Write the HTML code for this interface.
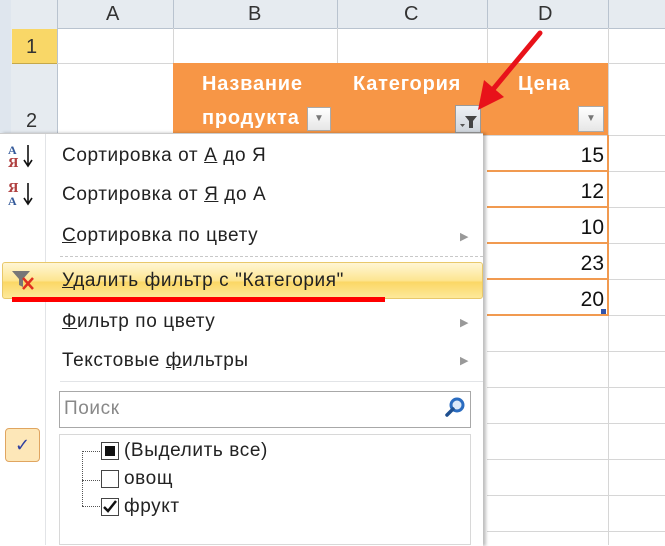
<!DOCTYPE html>
<html><head><meta charset="utf-8"><style>
body{margin:0;width:665px;height:545px;overflow:hidden;background:#fff;font-family:"Liberation Sans","DejaVu Sans",sans-serif;position:relative}
.a{position:absolute}
.t{font-size:19px;letter-spacing:0.6px;color:#222;white-space:nowrap}
.hl{position:absolute;left:0;right:0;height:1px;background:#d6d6d6}
.vl{position:absolute;top:0;bottom:0;width:1px;background:#d6d6d6}
.num{position:absolute;left:487px;width:117px;text-align:right;font-size:21px;color:#111}
.ob{position:absolute;left:487px;width:121px;height:2px;background:#f19a50}
.hd{color:#fff;font-weight:bold;font-size:20px;letter-spacing:0.8px}
u{text-decoration:underline}
</style></head><body>
<div class="a" style="left:0;top:0;width:665px;height:28px;background:#e6ebf0;border-bottom:1px solid #b9c3cf"></div>
<div class="a" style="left:0;top:0;width:11px;height:545px;background:#dfe6ee"></div>
<div class="a" style="left:11px;top:0;width:46px;height:545px;background:#e6ebf0;border-right:1px solid #b9c3cf"></div>
<div class="a" style="left:12px;top:29px;width:45px;height:34px;background:#f9d767;border-bottom:1px solid #c5a84a"></div>
<div class="a t" style="left:26px;top:36px;font-size:20px;color:#333">1</div>
<div class="a t" style="left:26px;top:110px;font-size:20px;color:#333">2</div>
<div class="a t" style="left:106px;top:3px;font-size:20px;color:#333">A</div>
<div class="a t" style="left:248px;top:3px;font-size:20px;color:#333">B</div>
<div class="a t" style="left:404px;top:3px;font-size:20px;color:#333">C</div>
<div class="a t" style="left:538px;top:3px;font-size:20px;color:#333">D</div>
<div class="vl" style="left:173px;top:0;height:28px;background:#b9c3cf"></div>
<div class="vl" style="left:337px;top:0;height:28px;background:#b9c3cf"></div>
<div class="vl" style="left:487px;top:0;height:28px;background:#b9c3cf"></div>
<div class="vl" style="left:608px;top:0;height:28px;background:#b9c3cf"></div>
<div class="vl" style="left:173px;top:28px;height:35px"></div>
<div class="vl" style="left:337px;top:28px;height:35px"></div>
<div class="vl" style="left:487px;top:28px;height:35px"></div>
<div class="vl" style="left:608px;top:28px"></div>
<div class="hl" style="left:57px;top:63px"></div>
<div class="hl" style="left:57px;top:135px"></div>
<div class="hl" style="left:487px;top:171px"></div><div class="hl" style="left:487px;top:207px"></div><div class="hl" style="left:487px;top:243px"></div><div class="hl" style="left:487px;top:279px"></div><div class="hl" style="left:487px;top:315px"></div><div class="hl" style="left:487px;top:351px"></div><div class="hl" style="left:487px;top:387px"></div><div class="hl" style="left:487px;top:423px"></div><div class="hl" style="left:487px;top:459px"></div><div class="hl" style="left:487px;top:495px"></div><div class="hl" style="left:487px;top:531px"></div>
<div class="a" style="left:173px;top:63px;width:435px;height:72px;background:#f79646"></div>
<div class="a t hd" style="left:202px;top:73px">Название</div>
<div class="a t hd" style="left:202px;top:107px">продукта</div>
<div class="a t hd" style="left:353px;top:73px">Категория</div>
<div class="a t hd" style="left:518px;top:73px">Цена</div>
<div class="a" style="left:307px;top:107px;width:24px;height:24px;background:linear-gradient(#fff,#e6e6e6);border:1px solid #aaa;box-sizing:border-box;color:#777;font-size:10px;text-align:center;line-height:22px">▼</div>
<div class="a" style="left:455px;top:105px;width:26px;height:28px;background:linear-gradient(#eef1f5,#cfd5dc);border:1px solid #999;box-sizing:border-box"><svg width="24" height="26"><path d="M4 18h5l-2.5 3z" fill="#555"/><path d="M9 10h12l-4 5v7h-4v-7z" fill="#444"/></svg></div>
<div class="a" style="left:578px;top:106px;width:26px;height:26px;background:linear-gradient(#fff,#e6e6e6);border:1px solid #aaa;box-sizing:border-box;color:#777;font-size:10px;text-align:center;line-height:24px">▼</div>
<div class="ob" style="top:170px"></div><div class="ob" style="top:206px"></div><div class="ob" style="top:242px"></div><div class="ob" style="top:278px"></div><div class="ob" style="top:314px"></div>
<div class="a" style="left:607px;top:135px;width:2px;height:181px;background:#f19a50"></div>
<div class="num" style="top:144px">15</div><div class="num" style="top:180px">12</div><div class="num" style="top:216px">10</div><div class="num" style="top:252px">23</div><div class="num" style="top:288px">20</div>
<div class="a" style="left:601px;top:309px;width:5px;height:5px;background:#3355aa"></div>
<svg class="a" style="left:460px;top:25px" width="100" height="110"><path d="M80 8 L30 68" stroke="#e8121a" stroke-width="5" stroke-linecap="round"/><path d="M18 85 L24 55 L44 72z" fill="#e8121a"/></svg>
<div class="a" style="left:0;top:133px;width:483px;height:412px;background:#fff;box-shadow:3px 0 3px rgba(0,0,0,.25);border-top:1px solid #ccc"></div>
<div class="a" style="left:45px;top:134px;width:1px;height:411px;background:#e2e4e7"></div>
<svg class="a" style="left:8px;top:142px" width="30" height="28"><text x="0" y="12" font-size="12" font-weight="bold" fill="#345a9a" font-family="Liberation Serif">A</text><text x="0" y="25" font-size="12" font-weight="bold" fill="#b04040" font-family="DejaVu Serif">Я</text><path d="M20 3v20M16 18l4 6 4-6" stroke="#111" stroke-width="1.6" fill="none"/></svg>
<svg class="a" style="left:8px;top:180px" width="30" height="28"><text x="0" y="12" font-size="12" font-weight="bold" fill="#b04040" font-family="DejaVu Serif">Я</text><text x="0" y="25" font-size="12" font-weight="bold" fill="#345a9a" font-family="Liberation Serif">A</text><path d="M20 3v20M16 18l4 6 4-6" stroke="#111" stroke-width="1.6" fill="none"/></svg>
<div class="a t" style="left:62px;top:145px">Сортировка от <u>А</u> до Я</div>
<div class="a t" style="left:62px;top:184px">Сортировка от <u>Я</u> до А</div>
<div class="a t" style="left:62px;top:225px"><u>С</u>ортировка по цвету</div>
<div class="a" style="left:460px;top:230px;color:#999;font-size:11px">▶</div>
<div class="a" style="left:60px;top:256px;width:423px;border-top:1px dashed #c8c8c8"></div>
<div class="a" style="left:2px;top:262px;width:481px;height:37px;box-sizing:border-box;border:1px solid #e8c86a;border-radius:3px;background:linear-gradient(#fff6d4,#fde591 50%,#fbd766 55%,#fde99a)"></div>
<svg class="a" style="left:10px;top:268px" width="30" height="24"><path d="M2 3h18l-7 8v8l-4-2v-6z" fill="#777"/><path d="M13 10l10 11M23 10l-10 11" stroke="#e03020" stroke-width="2.5"/></svg>
<div class="a t" style="left:62px;top:270px"><u>У</u>далить фильтр с "Категория"</div>
<div class="a" style="left:12px;top:297px;width:373px;height:5px;background:#f00"></div>
<div class="a t" style="left:62px;top:311px"><u>Ф</u>ильтр по цвету</div>
<div class="a" style="left:460px;top:316px;color:#999;font-size:11px">▶</div>
<div class="a t" style="left:62px;top:350px">Текстовые <u>ф</u>ильтры</div>
<div class="a" style="left:460px;top:354px;color:#999;font-size:11px">▶</div>
<div class="a" style="left:60px;top:381px;width:423px;height:1px;background:#e2e4e7"></div>
<div class="a" style="left:59px;top:391px;width:412px;height:37px;border:1px solid #a8a8a8;box-sizing:border-box"></div>
<div class="a t" style="left:64px;top:398px;color:#888">Поиск</div>
<svg class="a" style="left:443px;top:396px" width="24" height="24"><circle cx="14" cy="9" r="6" stroke="#2a6cc0" stroke-width="3" fill="#dce9f8"/><path d="M10 13L4 19" stroke="#1e4f8f" stroke-width="3.5" stroke-linecap="round"/></svg>
<div class="a" style="left:59px;top:434px;width:412px;height:111px;border:1px solid #d8d8d8;box-sizing:border-box"></div>
<div class="a" style="left:82px;top:451px;height:55px;border-left:1px dotted #555"></div>
<div class="a" style="left:82px;top:451px;width:18px;border-top:1px dotted #555"></div>
<div class="a" style="left:82px;top:480px;width:18px;border-top:1px dotted #555"></div>
<div class="a" style="left:82px;top:506px;width:18px;border-top:1px dotted #555"></div>
<div class="a" style="left:101px;top:442px;width:18px;height:18px;border:1px solid #444;box-sizing:border-box;padding:3px"><div style="width:10px;height:10px;background:#111"></div></div>
<div class="a" style="left:101px;top:470px;width:18px;height:18px;border:1px solid #444;box-sizing:border-box"></div>
<div class="a" style="left:101px;top:498px;width:18px;height:18px;border:1px solid #444;box-sizing:border-box"></div>
<svg class="a" style="left:101px;top:498px" width="18" height="18"><path d="M3 9l4 4 8-10" stroke="#111" stroke-width="2.5" fill="none"/></svg>
<div class="a t" style="left:124px;top:440px">(Выделить все)</div>
<div class="a t" style="left:124px;top:468px">овощ</div>
<div class="a t" style="left:124px;top:496px">фрукт</div>
<div class="a" style="left:5px;top:428px;width:35px;height:34px;box-sizing:border-box;border:1px solid #e0a560;border-radius:4px;background:#fde7b8;color:#3040a0;font-size:18px;text-align:center;line-height:32px">✓</div>
</body></html>
